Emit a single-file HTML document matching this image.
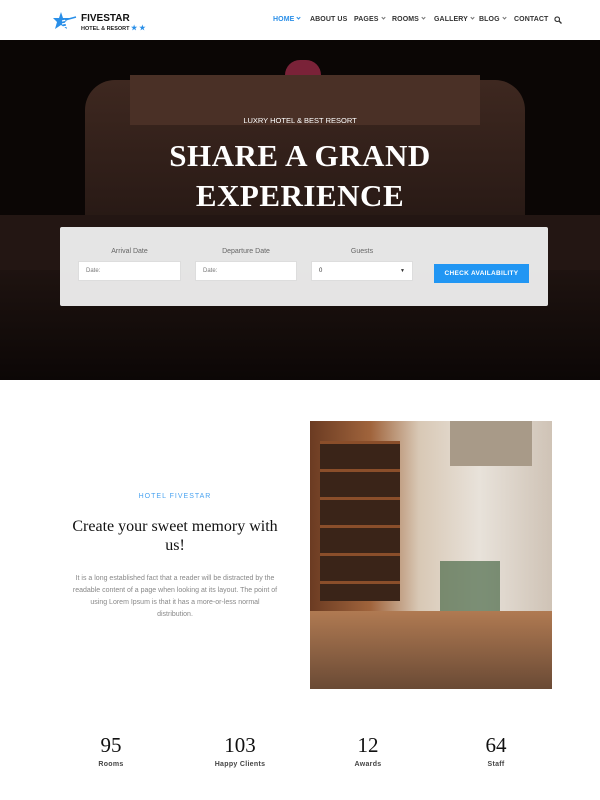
<!DOCTYPE html>
<html><head><meta charset="utf-8"><style>
*{margin:0;padding:0;box-sizing:border-box}
body{width:600px;height:800px;overflow:hidden;background:#fff;font-family:"Liberation Sans",sans-serif;position:relative}
.nav{position:absolute;top:0;left:0;width:600px;height:40px;background:#fff}
.nav .m{position:absolute;top:16px;font-size:7px;line-height:8px;font-weight:bold;color:#333;letter-spacing:.1px;white-space:nowrap}
.ch{display:inline-block;width:3px;height:3px;border-right:1px solid #777;border-bottom:1px solid #777;transform:rotate(45deg);margin-left:3px;vertical-align:2px}
.hero{position:absolute;top:40px;left:0;width:600px;height:340px;background:#0b0605;overflow:hidden}
.abs{position:absolute}
.serif{font-family:"Liberation Serif",serif}
.inp{position:absolute;top:261px;height:20px;background:#fff;border:1px solid #ddd;font-size:6px;color:#777;padding:6px 7px}
.lab{position:absolute;top:248px;font-size:7px;color:#666;text-align:center}
.num{position:absolute;top:733px;font-family:"Liberation Serif",serif;font-size:21px;color:#111;text-align:center;width:80px}
.sl{position:absolute;top:761px;font-size:7px;font-weight:bold;color:#444;text-align:center;width:80px;letter-spacing:.3px}
</style></head><body>
<div class="nav">
<svg class="abs" style="left:53px;top:12px" width="24" height="18" viewBox="0 0 24 18"><polygon points="8,0 10,6 18,6 12,10 14,17 8,13 2,17 4,10 0,6 6,6" fill="#2a8fe8"/><path d="M9 9 L23 6 M9 12 L23 9 M10 15 L23 12" stroke="#fff" stroke-width="1.2"/><path d="M12 8 L23 5" stroke="#2a8fe8" stroke-width="1.5"/></svg>
<div class="abs" style="left:81px;top:13px;font-size:10px;font-weight:bold;color:#111">FIVESTAR</div>
<div class="abs" style="left:81px;top:24px;font-size:5.5px;font-weight:bold;color:#222">HOTEL &amp; RESORT <span style="color:#2a8fe8;font-size:7px">★ ★</span></div>
<div class="m" style="left:273px;color:#2a8fe8">HOME<span class="ch" style="border-color:#2a8fe8"></span></div>
<div class="m" style="left:310px">ABOUT US</div>
<div class="m" style="left:354px">PAGES<span class="ch"></span></div>
<div class="m" style="left:392px">ROOMS<span class="ch"></span></div>
<div class="m" style="left:434px">GALLERY<span class="ch"></span></div>
<div class="m" style="left:479px">BLOG<span class="ch"></span></div>
<div class="m" style="left:514px">CONTACT</div>
<svg class="abs" style="left:554px;top:16px" width="8" height="8" viewBox="0 0 8 8"><circle cx="3.2" cy="3.2" r="2.3" stroke="#333" stroke-width="1.1" fill="none"/><path d="M5 5L7.5 7.5" stroke="#333" stroke-width="1.3"/></svg>
</div>
<div class="hero">
<div class="abs" style="left:85px;top:40px;width:440px;height:190px;background:linear-gradient(#3e2820,#2c1c17 60%,#1e1310);border-radius:30px 30px 0 0"></div>
<div class="abs" style="left:130px;top:35px;width:350px;height:50px;background:#4a3026"></div>
<div class="abs" style="left:285px;top:20px;width:36px;height:15px;background:#7a2238;border-radius:18px 18px 0 0"></div>
<div class="abs" style="left:0;top:175px;width:600px;height:55px;background:#231613"></div>
<div class="abs" style="left:0;top:230px;width:600px;height:110px;background:linear-gradient(#1e1310,#0c0706)"></div>
<div class="abs" style="left:0;top:76px;width:600px;text-align:center;color:#fff;font-size:7.5px">LUXRY HOTEL &amp; BEST RESORT</div>
<div class="abs serif" style="left:0;top:96px;width:600px;text-align:center;color:#fff;font-size:31px;line-height:40px;font-weight:bold;letter-spacing:.5px">SHARE A GRAND<br>EXPERIENCE</div>
</div>
<div class="abs" style="left:60px;top:227px;width:488px;height:79px;background:rgba(240,240,240,.95);border-radius:2px"></div>
<div class="lab" style="left:78px;width:103px">Arrival Date</div>
<div class="lab" style="left:195px;width:102px">Departure Date</div>
<div class="lab" style="left:311px;width:102px">Guests</div>
<div class="inp" style="left:78px;width:103px">Date:</div>
<div class="inp" style="left:195px;width:102px">Date:</div>
<div class="inp" style="left:311px;width:102px;color:#333">0<span style="float:right;font-size:5px">▼</span></div>
<div class="abs" style="left:434px;top:264px;width:95px;height:19px;background:#2196f3;color:#fff;font-size:6.5px;font-weight:bold;text-align:center;line-height:19px;letter-spacing:.3px">CHECK AVAILABILITY</div>

<div class="abs" style="left:60px;top:493px;width:230px;text-align:center;color:#4aa3f0;font-size:7px;letter-spacing:1px">HOTEL FIVESTAR</div>
<div class="abs serif" style="left:70px;top:517px;width:210px;text-align:center;color:#111;font-size:16px;line-height:19px">Create your sweet memory with us!</div>
<div class="abs" style="left:72px;top:573px;width:206px;text-align:center;color:#888;font-size:7px;line-height:12px">It is a long established fact that a reader will be distracted by the readable content of a page when looking at its layout. The point of using Lorem Ipsum is that it has a more-or-less normal distribution.</div>

<div class="abs" style="left:310px;top:421px;width:242px;height:268px;background:linear-gradient(90deg,#6b3b22,#a0643c 25%,#d8c8b5 45%,#e8e2da 70%,#cfc3b6);overflow:hidden">
<div class="abs" style="left:10px;top:20px;width:80px;height:160px;background:repeating-linear-gradient(#8a4e2a 0 3px,#3a2418 3px 28px)"></div>
<div class="abs" style="left:140px;top:0;width:82px;height:45px;background:#a89a88"></div>
<div class="abs" style="left:0;top:190px;width:242px;height:78px;background:linear-gradient(#b07a52,#6a4a35)"></div>
<div class="abs" style="left:130px;top:140px;width:60px;height:50px;background:#4d6b4a;opacity:.7"></div>
</div>

<div class="num" style="left:71px">95</div><div class="sl" style="left:71px">Rooms</div>
<div class="num" style="left:200px">103</div><div class="sl" style="left:200px">Happy Clients</div>
<div class="num" style="left:328px">12</div><div class="sl" style="left:328px">Awards</div>
<div class="num" style="left:456px">64</div><div class="sl" style="left:456px">Staff</div>
</body></html>
